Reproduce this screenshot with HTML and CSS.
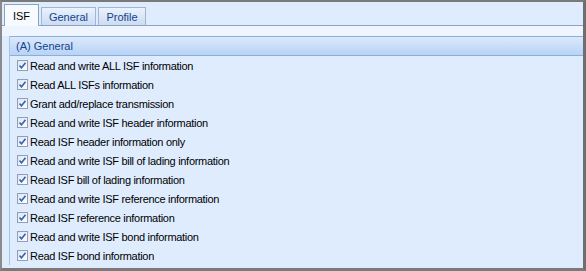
FILE: index.html
```html
<!DOCTYPE html>
<html lang="en">
<head>
  <meta charset="UTF-8">
  <title>ISF Permissions</title>
  <link rel="stylesheet" href="styles.css">
</head>
<body>
  <div class="frame">
    <!-- Tabs -->
    <div class="tabs">
      <div class="tab active">ISF</div>
      <div class="tab">General</div>
      <div class="tab">Profile</div>
    </div>
    <div class="tab-gap"></div>

    <!-- Group -->
    <div class="group">
      <div class="group-header">(A) General</div>
      <ul class="perm-list" id="perm-list"></ul>
    </div>
  </div>

  <script>
    const perms = [
      'Read and write ALL ISF information',
      'Read ALL ISFs information',
      'Grant add/replace transmission',
      'Read and write ISF header information',
      'Read ISF header information only',
      'Read and write ISF bill of lading information',
      'Read ISF bill of lading information',
      'Read and write ISF reference information',
      'Read ISF reference information',
      'Read and write ISF bond information',
      'Read ISF bond information'
    ];

    const list = document.getElementById('perm-list');
    perms.forEach(p => {
      list.innerHTML += `
        <li>
          <span class="check">
            <svg width="7" height="7" viewBox="0 0 7 7"><path d="M0.5 3.5 L2.5 5.8 L6.5 0.8" fill="none" stroke="#3563b8" stroke-width="1.6"/></svg>
          </span>
          <span>${p}</span>
        </li>
      `;
    });
  </script>
</body>
</html>
```

FILE: styles.css
```css
body {
  margin: 0;
  padding: 0;
  font-family: "Liberation Sans", Arial, sans-serif;
  font-size: 11px;
  color: #000;
  background: #ffffff;
}

.frame {
  width: 586px;
  height: 271px;
  box-sizing: border-box;
  border-top: 2px solid #7a7a7a;
  border-left: 2px solid #8a8a8a;
  border-right: 3px solid #6e6e6e;
  border-bottom: 3px solid #7a7a7a;
  background-color: #dfecfe;
  overflow: hidden;
}

.tabs {
  display: flex;
  align-items: flex-end;
  gap: 2px;
  padding: 0 0 0 2px;
  height: 23px;
  border-bottom: 1px solid #8da2c0;
}

.tab {
  height: 18px;
  box-sizing: border-box;
  padding: 3px 0 0;
  text-align: center;
  border: 1px solid #a1b6d3;
  border-bottom: none;
  background: linear-gradient(#eaf2fd, #cbdcf3);
  color: #15428b;
}

.tab:nth-child(2) {
  width: 55px;
}

.tab:nth-child(3) {
  width: 48px;
}

.tab.active {
  width: 35px;
  height: 22px;
  padding-top: 5px;
  margin-bottom: -1px;
  background: #f7fbff;
  border-color: #8da2c0;
  color: #000;
}

.tab-gap {
  height: 10px;
  background-color: #eef5ff;
}

.group {
  margin-left: 7px;
  border-left: 1px solid #a9c1e2;
}

.group-header {
  height: 18px;
  line-height: 18px;
  padding-left: 6px;
  border-top: 1px solid #8eaddb;
  border-bottom: 1px solid #8eaddb;
  background: linear-gradient(#dbe9fb, #b8d3f6);
  color: #15428b;
}

.perm-list {
  list-style: none;
  margin: 0;
  padding: 0;
}

.perm-list li {
  display: flex;
  align-items: center;
  height: 19px;
  padding-left: 7px;
  letter-spacing: -0.3px;
}

.check {
  width: 9px;
  height: 9px;
  margin-right: 2px;
  display: flex;
  align-items: center;
  justify-content: center;
  border: 1px solid #8f9fb8;
  background: linear-gradient(135deg, #dfe6ef, #ffffff);
}
```
